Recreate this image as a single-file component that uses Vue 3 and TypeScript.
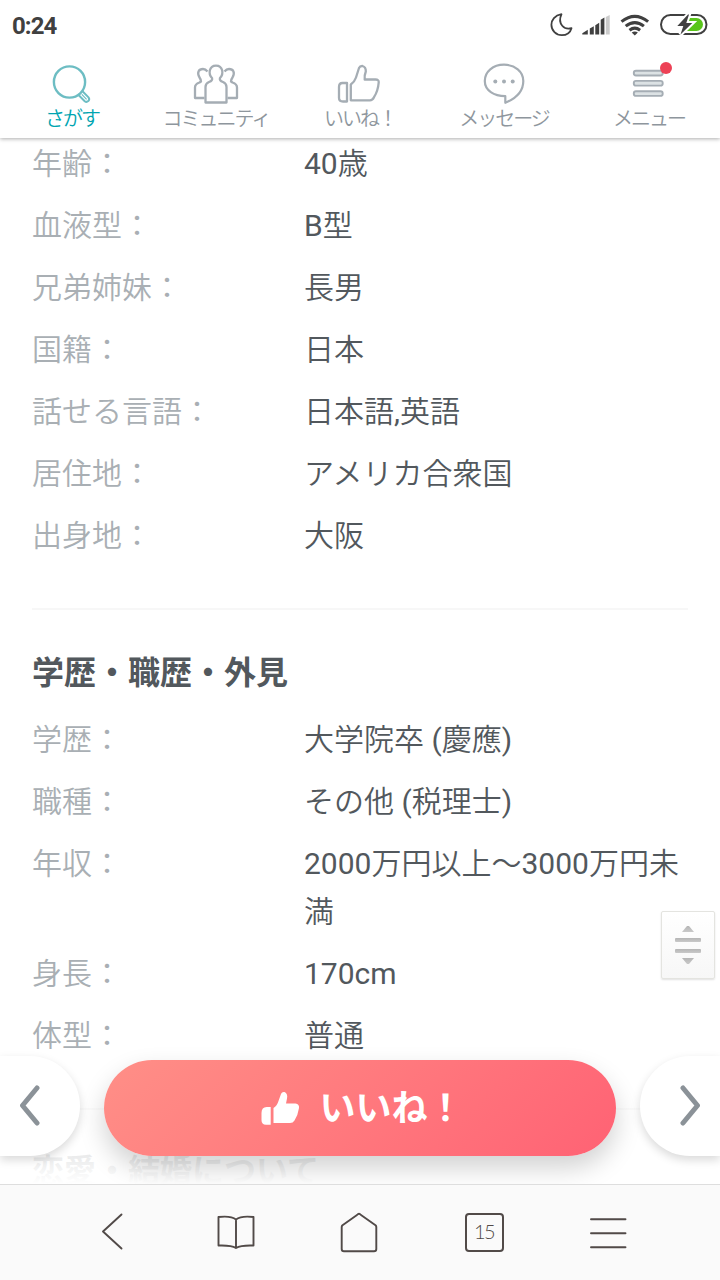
<script setup lang="ts">
interface Row {
  label: string
  value: string
}

const basics: Row[] = [
  { label: '年齢', value: '40歳' },
  { label: '血液型', value: 'B型' },
  { label: '兄弟姉妹', value: '長男' },
  { label: '国籍', value: '日本' },
  { label: '話せる言語', value: '日本語,英語' },
  { label: '居住地', value: 'アメリカ合衆国' },
  { label: '出身地', value: '大阪' },
]

const career: Row[] = [
  { label: '学歴', value: '大学院卒 (慶應)' },
  { label: '職種', value: 'その他 (税理士)' },
  { label: '年収', value: '2000万円以上〜3000万円未満' },
  { label: '身長', value: '170cm' },
  { label: '体型', value: '普通' },
]
</script>

<template>
  <div class="screen">
    <header class="header">
      <div class="status">
        <span class="time">0:24</span>
        <svg class="status-icons" width="172" height="30" viewBox="548 10 172 30" fill="none">
          <path d="M561.5 14.2C554.8 15.3 551.4 20 551.4 24.8C551.4 30.6 556 35.2 561.8 35.2C566.6 35.2 570.3 32.3 571.5 28.2C564.6 30.3 557 24.2 561.5 14.2Z" stroke="#404040" stroke-width="1.8" stroke-linejoin="round" />
          <path d="M582.3 34.6V33.2L587.8 29.800V34.600ZM589.8 28.500l4-2.300v8.400h-4ZM595.300 25.200l3.900-2.400v11.800h-3.900ZM600.700 21.200V19.800l3.700-2.300v17.100h-3.700Z" fill="#404040" />
          <path d="M605.8 17l3.900-2v19.600h-3.900Z" fill="#cbcbcb" />
          <path d="M621.500 21.600Q634.800 11.200 648.100 21.600M625.700 26.100Q634.800 19 643.900 26.100M629.500 30.200Q634.800 26.200 640.100 30.200" stroke="#404040" stroke-width="3.100" />
          <path d="M631.700 32.600Q634.800 30.300 637.900 32.600L634.800 35.400Z" fill="#404040" />
          <rect x="661" y="15" width="45.500" height="19" rx="9.500" stroke="#404040" stroke-width="2" />
          <path d="M689 18h7.500a6.500 6.500 0 0 1 0 13H685Z" fill="#59c51a" />
          <path d="M688 14.500L677.300 26H683.300L680.500 34.500L692.300 23H686.300L689 14.500Z" fill="#404040" stroke="#fff" stroke-width="4" paint-order="stroke" />
        </svg>
      </div>
      <nav class="tabs">
        <a class="tab active">
          <svg width="48" height="44" viewBox="47 62 48 44" fill="none" stroke="#6dbdc3" stroke-width="2.400">
            <circle cx="69.500" cy="82" r="15.600" />
            <path d="M78.800 95.200L84.700 101.200Q86.500 102.600 88.300 101.100Q90 99.200 88.500 97.400L82.500 91.300" stroke-width="2" />
            <path d="M81.800 94.300l4.800 5" stroke-width="1.200" />
          </svg>
          <span>さがす</span>
        </a>
        <a class="tab">
          <svg width="48" height="44" viewBox="192 62 48 44" fill="none" stroke="#a5adb4" stroke-width="2.300" stroke-linejoin="round">
            <path d="M204.500 98H195V87.500Q195 84 199.500 82.500L201 81.500Q201 79.500 199.500 77.500C196.500 72 199 69 203 69Q205.500 69 207.500 71.500M227.500 98H237V87.500Q237 84 232.500 82.500L231 81.500Q231 79.500 232.500 77.500C235.500 72 233 69 229 69Q226.500 69 224.500 71.500" />
            <path d="M205.500 102.500V87Q205.500 83.500 209 82Q213 80.500 212 78C208 74 209 65.600 216 65.600S224 74 220 78Q219 80.500 223 82Q226.500 83.500 226.500 87V102.500Z" />
          </svg>
          <span>コミュニティ</span>
        </a>
        <a class="tab likes">
          <svg width="48" height="44" viewBox="335 62 48 44" fill="none" stroke="#a5adb4" stroke-width="2.300" stroke-linejoin="round">
            <path d="M347 83h-4.500Q339 83 339 87v11q0 3.500 4 3.500h4Z" />
            <path d="M350.800 100.300V84.500Q354.500 82 356 77.500L359 68Q360 65.800 362.500 66Q366 67 365.800 71.500Q364.200 75.500 364.700 79.500H375.500Q379 79.500 378.700 82.500Q378 91 374 97.200Q372.500 100.300 370 100.300Z" />
          </svg>
          <span>いいね！</span>
        </a>
        <a class="tab">
          <svg width="48" height="44" viewBox="480 62 48 44" fill="none" stroke="#a5adb4" stroke-width="2.200" stroke-linejoin="round">
            <path d="M504 64.700C493 64.700 484.800 71.500 484.800 81C484.800 90.500 494 96 505.300 96.200V102.800C517 98 523.300 91 523.300 81C523.300 71.500 515 64.700 504 64.700Z" />
            <g fill="#a5adb4" stroke="none"><circle cx="495.300" cy="81.500" r="2" /><circle cx="504" cy="81.500" r="2" /><circle cx="512.700" cy="81.500" r="2" /></g>
          </svg>
          <span>メッセージ</span>
        </a>
        <a class="tab">
          <svg width="48" height="44" viewBox="625 62 48 44" fill="#dce2e4" stroke="#a5adb4" stroke-width="1.900">
            <rect x="633.800" y="70.800" width="28.900" height="4.700" rx="2.200" />
            <rect x="633.800" y="80.900" width="28.900" height="4.700" rx="2.200" />
            <rect x="633.800" y="91.200" width="28.900" height="4.700" rx="2.200" />
            <circle cx="666" cy="68" r="6" fill="#ed4256" stroke="none" />
          </svg>
          <span>メニュー</span>
        </a>
      </nav>
    </header>

    <main class="profile">
      <section class="section">
        <dl class="rows">
          <div v-for="row in basics" :key="row.label" class="row">
            <dt>{{ row.label }}：</dt>
            <dd>{{ row.value }}</dd>
          </div>
        </dl>
      </section>
      <section class="section">
        <h2>学歴・職歴・外見</h2>
        <dl class="rows">
          <div v-for="row in career" :key="row.label" class="row">
            <dt>{{ row.label }}：</dt>
            <dd>{{ row.value }}</dd>
          </div>
        </dl>
      </section>
      <section class="section last">
        <h2>恋愛・結婚について</h2>
      </section>

      <div class="scroller">
        <svg width="28" height="40" viewBox="0 0 28 40">
          <defs>
            <linearGradient id="grip" x1="0" y1="0" x2="0" y2="1">
              <stop offset="0" stop-color="#b5b5b5" />
              <stop offset="1" stop-color="#c9c9c9" />
            </linearGradient>
          </defs>
          <g fill="url(#grip)">
            <path d="M13 1h2l5 6H8Z" />
            <rect x="1" y="13" width="26" height="4" rx="1" />
            <rect x="1" y="24" width="26" height="4" rx="1" />
            <path d="M8 33h12l-5 6h-2Z" />
          </g>
        </svg>
      </div>

      <div class="actions">
        <button class="side prev" aria-label="前へ">
          <svg width="22" height="42" viewBox="0 0 22 42" fill="none"><path d="M18 3L3.500 20.500L18 38" /></svg>
        </button>
        <button class="like">
          <svg width="40" height="36" viewBox="260 1089 40 36" fill="#fff">
            <path d="M270.700 1106h-4Q261.500 1106 261.500 1112v7q0 4.700 4.500 4.700h4.700Z" />
            <path d="M273.500 1122V1107Q277 1105 278.500 1100L281 1093Q282 1090.500 284.500 1091Q288 1092.500 287 1097.500L286 1102.500H295.500Q299.500 1103 299 1107Q298 1114 294.500 1119.500Q293 1122 290 1122Z" />
          </svg>
          <span>いいね！</span>
        </button>
        <button class="side next" aria-label="次へ">
          <svg width="22" height="42" viewBox="0 0 22 42" fill="none"><path d="M4 3L18.500 20.500L4 38" /></svg>
        </button>
      </div>
    </main>

    <footer class="toolbar">
      <svg width="40" height="44" viewBox="92 1210 40 44"><path d="M121.500 1214.500L103 1231.500L121.500 1248.500" /></svg>
      <svg width="40" height="44" viewBox="216 1210 40 44"><path d="M236 1219.500V1248Q231 1245 218.500 1245.500V1217Q231 1215.500 236 1219.500Q241 1215.500 253.500 1217V1245.500Q241 1245 236 1248" /></svg>
      <svg width="40" height="44" viewBox="340 1210 40 44"><path d="M359 1213.800Q358 1213.800 357 1215L342.500 1225.300Q341.700 1226 341.700 1227V1249Q341.700 1251.300 344 1251.300H374Q376.300 1251.300 376.300 1249V1227Q376.300 1226 375.500 1225.300L361 1215Q360 1213.800 359 1213.800Z" /></svg>
      <div class="tabs-slot"><span class="tab-count">15</span></div>
      <svg width="40" height="44" viewBox="588 1210 40 44"><path d="M591 1219.300h34.500M591 1233.300h34.500M591 1247.300h34.500" /></svg>
    </footer>
  </div>
</template>

<style>
body {
  margin: 0;
}
</style>

<style scoped>
.screen {
  width: 720px;
  height: 1280px;
  display: flex;
  flex-direction: column;
  overflow: hidden;
  background: #fff;
  color: #52585d;
  font-family: Roboto, 'Noto Sans CJK JP', sans-serif;
}
.header {
  position: relative;
  z-index: 2;
  flex: none;
  height: 138px;
  background: #fff;
  box-shadow: 0 1px 4px rgba(0, 0, 0, 0.32);
}
.status {
  display: flex;
  justify-content: space-between;
  height: 62px;
  box-sizing: border-box;
  padding: 10px 0 0 12px;
}
.time {
  font-size: 24px;
  font-weight: 700;
  line-height: 32px;
  letter-spacing: -0.9px;
  color: #404040;
}
.tabs {
  display: grid;
  grid-template-columns: 144px 146px 140px 150px 140px;
  margin-left: -1px;
}
.tab {
  display: flex;
  flex-direction: column;
  align-items: center;
  color: #8e969d;
  white-space: nowrap;
}
.tab span {
  font-size: 20px;
  font-weight: 350;
  line-height: 24px;
  padding-top: 1px;
  letter-spacing: -2px;
}
.tab.active span {
  padding-left: 2px;
  color: #00a5b1;
}
.tab.likes span {
  padding-left: 2px;
}
.profile {
  position: relative;
  flex: none;
  height: 1046px;
  overflow: hidden;
}
.section {
  margin: 0 32px;
  padding-bottom: 48px;
  border-bottom: 2px solid #f7f7f7;
}
.section:first-child {
  padding-top: 2px;
}
.section.last {
  border: 0;
}
h2 {
  margin: 0;
  padding: 39px 0 19px;
  font-size: 32px;
  line-height: 48px;
  font-weight: 700;
}
.last h2 {
  padding-top: 37px;
}
.rows {
  display: flex;
  flex-direction: column;
  gap: 14px;
  margin: 0;
}
.row {
  display: grid;
  grid-template-columns: 272px 384px;
  font-size: 30px;
  line-height: 48px;
}
dt {
  color: #a9afb4;
  font-weight: 350;
}
dd {
  margin: 0;
  font-family: Roboto, 'Noto Sans CJK JP DemiLight', 'Noto Sans CJK JP', sans-serif;
}
.scroller {
  position: absolute;
  right: 5px;
  top: 773px;
  width: 52px;
  height: 66px;
  display: flex;
  align-items: center;
  justify-content: center;
  border: 1px solid #e4e4e0;
  border-radius: 2px;
  background: linear-gradient(#fff, #f7f7f7);
  box-shadow: 0 1px 2px rgba(0, 0, 0, 0.12);
}
.actions {
  position: absolute;
  inset: auto 0 0;
  height: 128px;
  display: flex;
  justify-content: space-between;
  align-items: flex-start;
  background: linear-gradient(rgba(255, 255, 255, 0), rgba(255, 255, 255, 0.87) 76%, #fff);
}
button {
  display: flex;
  align-items: center;
  justify-content: center;
  border: 0;
  font-family: inherit;
}
.side {
  width: 80px;
  height: 100px;
  padding: 0;
  background: #fff;
  box-shadow: 0 4px 10px rgba(0, 0, 0, 0.15);
}
.side path {
  stroke: #8b9298;
  stroke-width: 5;
  stroke-linecap: round;
  stroke-linejoin: round;
}
.prev {
  border-radius: 0 50px 50px 0;
  padding-right: 20px;
}
.next {
  border-radius: 50px 0 0 50px;
  padding-left: 20px;
}
.like {
  width: 512px;
  height: 96px;
  margin-top: 4px;
  padding: 0 0 0 4px;
  gap: 19px;
  border-radius: 48px;
  background: linear-gradient(135deg, #ff8f87, #ff6274);
  box-shadow: 0 12px 26px rgba(0, 0, 0, 0.18);
  color: #fff;
  font-size: 36px;
  font-weight: 700;
}
.like span {
  padding-bottom: 6px;
}
.toolbar {
  position: relative;
  flex: none;
  box-sizing: border-box;
  height: 96px;
  display: flex;
  justify-content: space-between;
  align-items: flex-start;
  padding: 25px 92px 0;
  border-top: 1px solid #dedede;
  background: #fafafa;
}
.toolbar path {
  fill: none;
  stroke: #514a48;
  stroke-width: 1.900;
  stroke-linecap: round;
  stroke-linejoin: round;
}
.tabs-slot {
  width: 40px;
  height: 44px;
  display: flex;
  align-items: center;
  justify-content: center;
}
.tab-count {
  width: 35px;
  height: 35px;
  border: 2px solid #514a48;
  border-radius: 4px;
  color: #514a48;
  font: 300 20px/32px Lato, sans-serif;
  letter-spacing: -1.500px;
  text-align: center;
}
</style>
